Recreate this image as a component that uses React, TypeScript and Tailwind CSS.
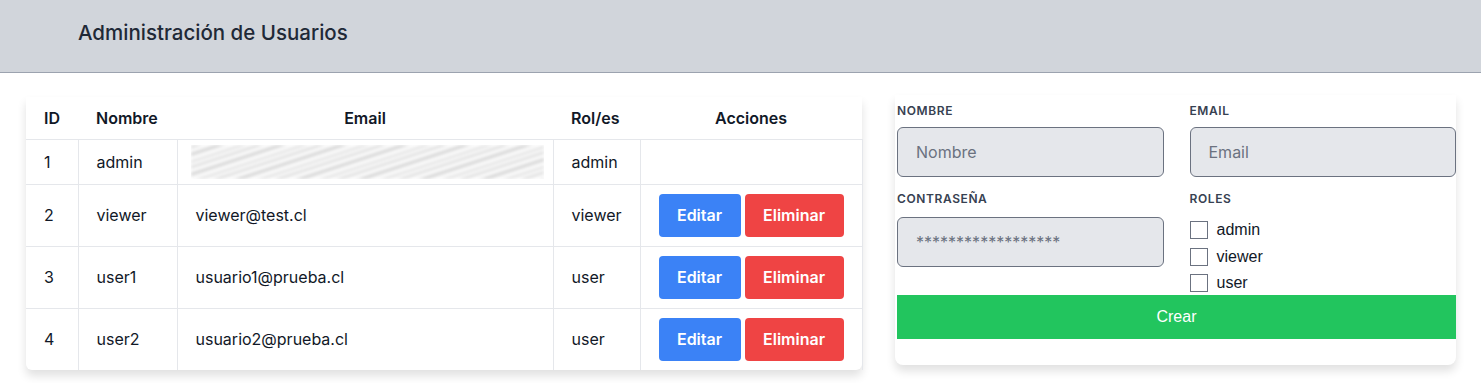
import React from "react";

const users = [
  { id: 1, name: "admin", email: "", role: "admin", actions: false },
  { id: 2, name: "viewer", email: "viewer@test.cl", role: "viewer", actions: true },
  { id: 3, name: "user1", email: "usuario1@prueba.cl", role: "user", actions: true },
  { id: 4, name: "user2", email: "usuario2@prueba.cl", role: "user", actions: true },
];

const td = "border-t border-r border-[#e5e7eb] px-[18px] align-middle";

function Field({ label, placeholder }: { label: string; placeholder: string }) {
  return (
    <div className="flex flex-col">
      <label className="text-[12px] leading-4 font-semibold tracking-[0.05em] text-[#374151]">{label}</label>
      <input
        placeholder={placeholder}
        className="mt-2 h-[50px] w-full rounded-md border border-[#6b7280] bg-[#e5e7eb] px-[18px] text-[16px] text-[#111827] outline-none placeholder:text-[#6b7280]"
      />
    </div>
  );
}

export default function App() {
  return (
    <div className="min-h-[383px] bg-white font-['Inter',sans-serif] text-[#111827]">
      <header className="flex h-[73px] items-center border-b border-[#9ca3af] bg-[#d1d5db] px-[78px] pb-[6px]">
        <h1 className="text-[20.5px] font-medium text-[#1f2937]">Administración de Usuarios</h1>
      </header>
      <main className="flex items-start gap-[33px] pl-[26px] pr-[25px] pt-[22px]">
        <div className="mt-[2px] w-[836px] shrink-0 rounded-b-md bg-white shadow-[0_6px_10px_rgba(0,0,0,0.12)]">
          <table className="w-full table-fixed border-collapse text-[16px]">
            <colgroup>
              <col className="w-[52px]" />
              <col className="w-[99px]" />
              <col className="w-[376px]" />
              <col className="w-[87px]" />
              <col className="w-[222px]" />
            </colgroup>
            <thead>
              <tr className="h-[42px]">
                <th className="px-[18px] text-left font-semibold">ID</th>
                <th className="px-[18px] text-left font-semibold">Nombre</th>
                <th className="px-[18px] text-center font-semibold">Email</th>
                <th className="px-[18px] text-left font-semibold">Rol/es</th>
                <th className="px-[18px] text-center font-semibold">Acciones</th>
              </tr>
            </thead>
            <tbody>
              {users.map((u) => (
                <tr key={u.id} className={u.actions ? "h-[62px]" : "h-[45px]"}>
                  <td className={td}>{u.id}</td>
                  <td className={td}>{u.name}</td>
                  {u.email ? (
                    <td className={td}>{u.email}</td>
                  ) : (
                    <td className="border-t border-r border-[#e5e7eb] px-[13px] align-middle">
                      <div className="h-[34px] w-[353px] overflow-hidden">
                        <div className="h-full w-full bg-[repeating-linear-gradient(162deg,#ffffff_0px,#d8d8d8_2px,#f6f6f6_4px,#fefefe_6px,#cfcfcf_9px,#f2f2f2_11px,#ffffff_13px,#e2e2e2_16px,#ffffff_19px)] blur-[1.5px]" />
                      </div>
                    </td>
                  )}
                  <td className={td}>{u.role}</td>
                  <td className="border-t border-r border-[#e5e7eb] pl-[18px] align-middle">
                    {u.actions && (
                      <div className="flex gap-1">
                        <button className="h-[43px] w-[82px] rounded bg-[#3b82f6] font-semibold text-white">Editar</button>
                        <button className="h-[43px] w-[99px] rounded bg-[#ef4444] font-semibold text-white">Eliminar</button>
                      </div>
                    )}
                  </td>
                </tr>
              ))}
            </tbody>
          </table>
        </div>
        <div className="flex-1 rounded-b-lg bg-white pl-[2px] pb-[26px] pt-2 shadow-[0_6px_10px_rgba(0,0,0,0.12)]">
          <div className="grid grid-cols-2 gap-x-[26px]">
            <Field label="NOMBRE" placeholder="Nombre" />
            <Field label="EMAIL" placeholder="Email" />
            <div className="mt-[14px] flex flex-col">
              <label className="text-[12px] leading-4 font-semibold tracking-[0.05em] text-[#374151]">CONTRASEÑA</label>
              <input
                placeholder="******************"
                className="mt-[10px] h-[50px] w-full rounded-md border border-[#6b7280] bg-[#e5e7eb] px-[18px] text-[16px] outline-none placeholder:text-[#6b7280]"
              />
            </div>
            <div className="mt-[14px] flex flex-col">
              <label className="text-[12px] leading-4 font-semibold tracking-[0.05em] text-[#374151]">ROLES</label>
              <div className="mt-[10px] flex h-[78px] flex-col font-['Liberation_Sans',sans-serif] text-[16px]">
                {["admin", "viewer", "user"].map((r) => (
                  <div key={r} className="flex h-[26.5px] shrink-0 items-center gap-[9px]">
                    <span className="h-[18px] w-[18px] border border-[#6b7280] bg-white" />
                    <span>{r}</span>
                  </div>
                ))}
              </div>
            </div>
          </div>
          <button className="relative h-11 w-full bg-[#22c55e] font-['Liberation_Sans',sans-serif] text-[16px] font-medium text-white">
            Crear
          </button>
        </div>
      </main>
    </div>
  );
}
